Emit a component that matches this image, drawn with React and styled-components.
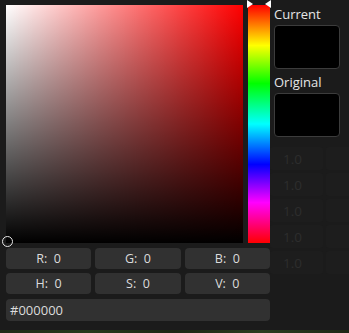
import styled, { createGlobalStyle } from 'styled-components';

const fields = [
  ['R', 0], ['G', 0], ['B', 0],
  ['H', 0], ['S', 0], ['V', 0],
];

const ghostRows = ['1.0', '1.0', '1.0', '1.0', '1.0'];

const Global = createGlobalStyle`
  html, body {
    margin: 0;
    background: #1b1b1b;
  }
  body {
    font-family: "Open Sans", "Noto Sans", sans-serif;
  }
`;

const App = () => (
  <>
    <Global />
    <Frame>
      <Panel>
        <PickerColumn>
          <PickerArea>
            <SVSquare>
              <Marker />
            </SVSquare>
            <HueTrack>
              <Arrow side="left" />
              <Arrow side="right" />
            </HueTrack>
          </PickerArea>
          <FieldGrid>
            {fields.map(([name, value]) => (
              <Field key={name}>
                {name}:&nbsp; {value}
              </Field>
            ))}
            <HexField>#000000</HexField>
          </FieldGrid>
        </PickerColumn>

        <SideColumn>
          <Label>Current</Label>
          <Swatch />
          <Label>Original</Label>
          <Swatch />
          <GhostList>
            {ghostRows.map((v, i) => (
              <GhostRow key={i}>
                <GhostCell>{v}</GhostCell>
                <GhostCell />
              </GhostRow>
            ))}
          </GhostList>
        </SideColumn>
      </Panel>
      <Ground />
    </Frame>
  </>
);

const Frame = styled.div`
  width: 349px;
  height: 333px;
  overflow: hidden;
  display: flex;
  flex-direction: column;
  background: #1b1b1b;
`;

const Panel = styled.div`
  flex: 1;
  display: flex;
  gap: 4px;
  padding: 5px 0 0 6px;
`;

const PickerColumn = styled.div`
  width: 264px;
  display: flex;
  flex-direction: column;
  gap: 5px;
`;

const PickerArea = styled.div`
  display: flex;
  gap: 5px;
  height: 238px;
`;

const SVSquare = styled.div`
  position: relative;
  width: 237px;
  height: 100%;
  background:
    linear-gradient(to top, #000, rgba(0, 0, 0, 0)),
    linear-gradient(to right, #fff, rgba(255, 255, 255, 0)),
    #ff0000;
`;

const Marker = styled.div`
  position: absolute;
  left: -4px;
  bottom: -4px;
  width: 9px;
  height: 9px;
  border: 1.5px solid #e8e8e8;
  border-radius: 50%;
`;

const HueTrack = styled.div`
  position: relative;
  width: 22px;
  height: 100%;
  background: linear-gradient(
    to bottom,
    #ff0000 0%,
    #ffff00 17%,
    #00ff00 33%,
    #00ffff 50%,
    #0000ff 67%,
    #ff00ff 83%,
    #ff0000 100%
  );
`;

const Arrow = styled.div`
  position: absolute;
  top: -5px;
  ${({ side }) => (side === 'left' ? 'left: -1px;' : 'right: -1px;')}
  width: 0;
  height: 0;
  border-top: 4px solid transparent;
  border-bottom: 4px solid transparent;
  ${({ side }) =>
    side === 'left'
      ? 'border-left: 6px solid #fff;'
      : 'border-right: 6px solid #fff;'}
`;

const FieldGrid = styled.div`
  display: grid;
  grid-template-columns: repeat(3, 1fr);
  grid-auto-rows: 21px;
  gap: 4px;
`;

const Field = styled.div`
  display: flex;
  align-items: center;
  justify-content: center;
  background: #313131;
  border-radius: 4px;
  color: #dcdcdc;
  font-size: 12.5px;
`;

const HexField = styled(Field)`
  grid-column: 1 / -1;
  height: 22px;
  justify-content: flex-start;
  padding-left: 4px;
  margin-top: 1px;
  font-size: 13px;
`;

const SideColumn = styled.div`
  flex: 1;
  display: flex;
  flex-direction: column;
`;

const Label = styled.div`
  color: #e6e6e6;
  font-size: 13px;
  line-height: 17px;
  height: 19px;
  margin-top: 1px;
`;

const Swatch = styled.div`
  width: 66px;
  height: 44px;
  box-sizing: border-box;
  background: #000;
  border: 1px solid #3c3c3c;
  border-radius: 4px;
  margin-bottom: 4px;
`;

const GhostList = styled.div`
  margin-top: 6px;
  margin-left: -4px;
  display: flex;
  flex-direction: column;
  gap: 3px;
`;

const GhostRow = styled.div`
  display: flex;
  gap: 3px;
  height: 23px;
`;

const GhostCell = styled.div`
  width: 53px;
  flex: none;
  display: flex;
  align-items: center;
  padding-left: 13px;
  box-sizing: border-box;
  background: #1d1d1d;
  border-radius: 3px;
  color: #2d2d2d;
  font-size: 13.5px;
`;

const Ground = styled.div`
  height: 3px;
  background: linear-gradient(to right, #1f2b17, #263a1c, #1c2614, #2a3d1f, #1d2716);
`;

export default App;
